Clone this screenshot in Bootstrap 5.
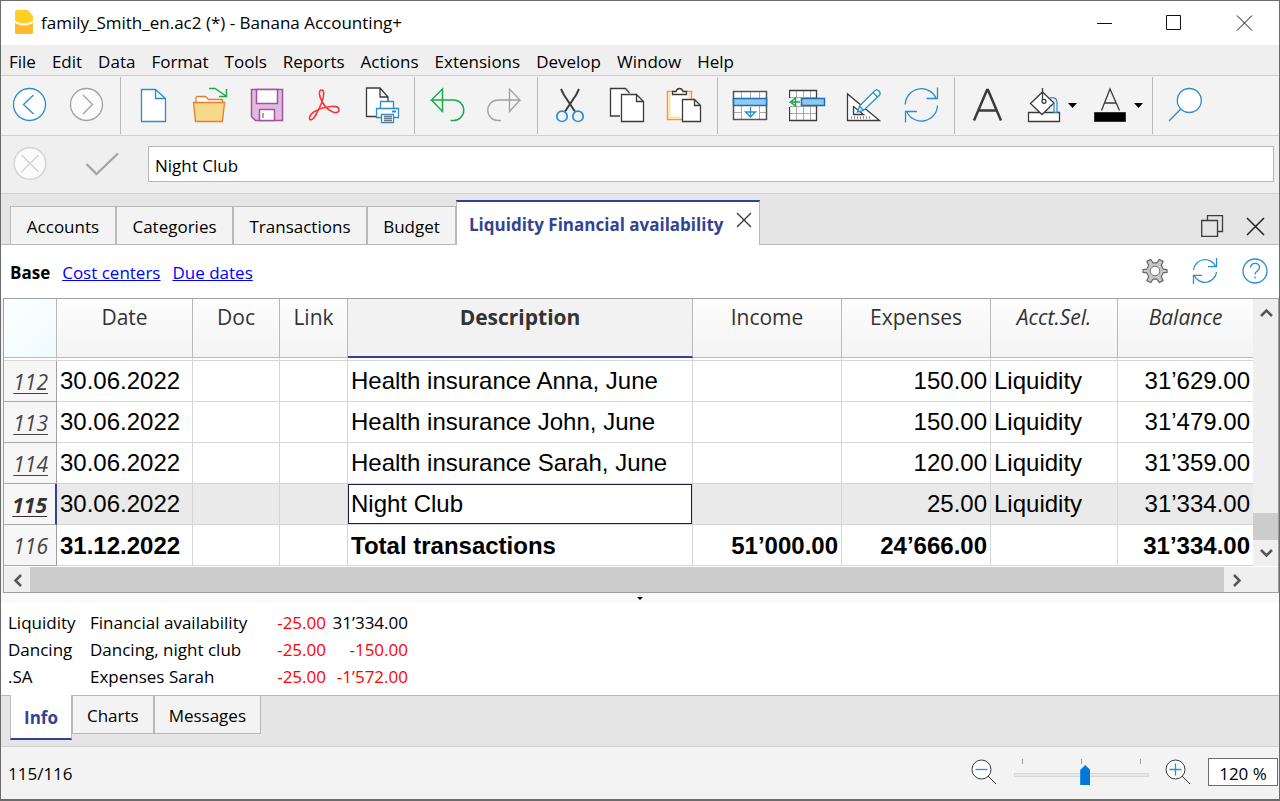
<!DOCTYPE html>
<html lang="en">
<head>
<meta charset="utf-8">
<meta name="viewport" content="width=device-width, initial-scale=1">
<title>family_Smith_en.ac2 (*) - Banana Accounting+</title>
<link href="https://cdn.jsdelivr.net/npm/bootstrap@5.3.0/dist/css/bootstrap.min.css" rel="stylesheet">
<style>
:root { --line: #b9b9b9; --soft: #d0d0d0; --accent: #324394; --blue: #2a8dd0; }
body { font: 17px/24px "Open Sans", "Noto Sans", sans-serif; color: #000; background: #fff; }
svg { display: block; fill: none; }
button { border: 0; background: none; padding: 0; color: inherit; }
.app-window { min-height: 100vh; border: 1px solid #6b6b6b; border-bottom-width: 2px; background: #f3f3f3; }

.title-bar { height: 44px; padding-left: 10px; background: #fff; }
.title-bar h1 { font-size: 17px; line-height: 24px; margin: 0 0 0 4px; font-weight: 400; }
.win-btn { width: 70px; height: 44px; }

.menu-bar { height: 31px; background: #efefef; border-bottom: 1px solid var(--soft); padding-left: 8px; gap: 16px; }
.menu-bar button { line-height: 30px; padding-top: 2px; white-space: nowrap; }

.tool-bar { height: 60px; border-bottom: 1px solid var(--soft); }
.tool-group { padding: 0 4px; border-right: 1px solid var(--line); margin: 1px 0; }
.tool-group:first-child { padding: 0 5px 0 0; }
.tool-group:last-child { border: 0; }
.tool { width: 57px; flex: none; display: flex; align-items: center; justify-content: center; }
.tool.with-menu { width: 66px; justify-content: flex-start; padding-left: 10px; gap: 5px; }
.k { stroke: #3b3b3b; stroke-width: 1.3; }
.b { stroke: var(--blue); stroke-width: 1.3; }
.g { stroke: #a0a0a0; stroke-width: 1.3; }
.n { stroke: #17ab4c; stroke-width: 1.5; }

.entry-bar { height: 58px; background: #efefef; border-bottom: 1px solid var(--soft); padding: 0 5px 2px 0; }
.entry-bar input { height: 36px; margin-left: 17px; border: 1px solid var(--line); border-radius: 0; padding: 3px 6px 0; font-size: 17px; color: #000; background: #fff; }

.doc-tabs { height: 51px; background: #e5e5e5; padding-left: 9px; box-shadow: inset 0 -1px var(--line); }
.doc-tab { height: 39px; border: 1px solid var(--line); background: #f3f3f3; text-align: center; padding-top: 3px; white-space: nowrap; }
.doc-tab.current { height: 45px; background: #fff; border-top: 2px solid var(--accent); border-bottom: 0; color: var(--accent); font-weight: 700; padding: 2px 6px 0 12px; }
.w-a { min-width: 106px; } .w-b { min-width: 117px; } .w-c { min-width: 134px; } .w-d { min-width: 89px; } .w-e { min-width: 304px; }

.view-bar { height: 53px; background: #fff; padding: 3px 11px 0 9px; gap: 12px; }
.view-bar a { color: #00f; }

.grid-frame { margin: 0 0 0 2px; border: 1px solid #a0a0a0; background: #fff; }
.ledger { width: 100%; table-layout: fixed; border-collapse: separate; border-spacing: 0; font: 24px/36px "Liberation Sans", sans-serif; }
.ledger thead th { height: 59px; vertical-align: top; text-align: center; font: 21px/30px "Open Sans", sans-serif; color: #333; padding: 3px 0 0; background: linear-gradient(#fdfdfd, #f4f4f4); border-right: 1px solid var(--line); border-bottom: 1px solid var(--line); }
.ledger thead th.computed { font-style: italic; }
.ledger thead th.corner { background: linear-gradient(135deg, #fdffff, #effbff); }
.ledger thead th.active-col { background: #f2f2f2; font-weight: 700; border-bottom: 2px solid var(--accent); }
.ledger .spacer td { height: 3px; padding: 0; }
.ledger tbody td, .ledger tbody th { border-right: 1px solid #d6d6d6; border-bottom: 1px solid #d6d6d6; padding: 0 3px; white-space: nowrap; overflow: hidden; }
.ledger tbody td { height: 41px; }
.ledger tbody th { font: italic 21px/36px "Open Sans", sans-serif; color: #444; text-align: right; padding: 2px 8px 0 0; background: #f6f6f6; border-right: 1px solid #a0a0a0; border-bottom-color: #a8a8a8; }
.ledger tbody th.linked { text-decoration: underline; text-decoration-thickness: 1px; text-underline-offset: 3px; }
.ledger tr > :last-child { border-right: 0; }
.ledger .selected td { background: #eaeaea; }
.ledger .selected th { font-weight: 700; color: #333; border-right: 2px solid var(--accent); }
.ledger .selected td.cell-focus { background: #fff; box-shadow: inset 0 0 0 1px #1c1c4c; }
.ledger .total td { font-weight: 700; padding-top: 2px; }
.num { text-align: right; }
.vscroll { width: 25px; flex: none; background: #efefef; }
.vscroll .thumb { height: 27px; background: #cdcdcd; }
.hscroll { height: 26px; border-top: 1px solid #fff; background: #efefef; }
.hscroll .thumb { background: #cdcdcd; }
.scroll-end { width: 26px; height: 26px; display: flex; align-items: center; justify-content: center; }
.scroll-gap { width: 28px; }
.splitter { height: 10px; background: #f9f9f9; }

.info-pane { background: #fff; height: 92px; padding: 6px 0 0 7px; }
.info-pane td { padding: 0; height: 27px; white-space: nowrap; }
.info-pane td.neg { color: #f00; }
.low-tabs { height: 52px; background: #e5e5e5; padding-left: 9px; border-bottom: 1px solid var(--soft); box-shadow: inset 0 1px var(--line); }
.low-tab { height: 39px; border: 1px solid var(--line); background: #f3f3f3; padding: 2px 14px 0; }
.low-tab.current { height: 45px; background: #fff; border-top: 0; border-bottom: 2px solid var(--accent); color: var(--accent); font-weight: 700; padding: 2px 13px 0; }

.status-bar { height: 50px; padding: 0 1px 0 7px; }
.zoom-ticks { height: 6px; padding: 0 8px; }
.zoom-ticks i { width: 1px; height: 5px; background: #a09a90; }
.zoom-box { width: 135px; }
.zoom-range { appearance: none; -webkit-appearance: none; display: block; width: 135px; height: 20px; margin: 0; background: transparent; }
.zoom-range::-webkit-slider-runnable-track { height: 4px; background: #e7eaea; border: 1px solid #d6d6d6; }
.zoom-range::-webkit-slider-thumb { -webkit-appearance: none; width: 10px; height: 20px; margin-top: -9px; background: #0078d7; clip-path: polygon(0 25%, 50% 0, 100% 25%, 100% 100%, 0 100%); }
.zoom-value { width: 70px; height: 28px; border: 1px solid #6b6b6b; background: #fff; padding: 2px 0 0; text-align: center; font-size: 17px; color: #000; }
</style>
</head>
<body>
<div class="app-window d-flex flex-column">

  <header class="title-bar d-flex align-items-center">
    <svg width="26" height="26" viewBox="0 0 26 26" aria-hidden="true"><path d="M5.500 0H17l5 6v5q-9 5-18 0V1.500Q4 0 5.500 0z" fill="#ffcf26"/><path d="M4 13q9 5 18 0v9.500q0 1.500-1.500 1.500h-15Q4 24 4 22.500z" fill="#ffbb2c"/></svg>
    <h1>family_Smith_en.ac2 (*) - Banana Accounting+</h1>
    <div class="ms-auto d-flex">
      <button class="win-btn" aria-label="Minimize"><svg class="m-auto" width="17" height="17" viewBox="0 0 17 17" stroke="#111"><path d="M1 8.500h15"/></svg></button>
      <button class="win-btn" aria-label="Maximize"><svg class="m-auto" width="17" height="17" viewBox="0 0 17 17" stroke="#111"><path d="M.500.500h14v14h-14z"/></svg></button>
      <button class="win-btn" aria-label="Close"><svg class="m-auto" width="17" height="17" viewBox="0 0 17 17" stroke="#111"><path d="M1 .500l15 15M16 .500l-15 15"/></svg></button>
    </div>
  </header>

  <nav class="menu-bar d-flex">
    <button>File</button><button>Edit</button><button>Data</button><button>Format</button><button>Tools</button><button>Reports</button><button>Actions</button><button>Extensions</button><button>Develop</button><button>Window</button><button>Help</button>
  </nav>

  <div class="tool-bar d-flex" role="toolbar" aria-label="Standard">
    <div class="tool-group d-flex">
      <button class="tool" aria-label="Back"><svg width="37" height="37"><g class="b"><circle cx="18.500" cy="17.500" r="16" fill="#fff"/><path d="M22.500 8L12.500 17.500l10 9.500"/></g></svg></button>
      <button class="tool" aria-label="Forward"><svg width="37" height="37"><g class="g"><circle cx="18.500" cy="17.500" r="16" fill="#fbfbfb"/><path d="M15 8l9.500 9.500L15 27"/></g></svg></button>
    </div>
    <div class="tool-group d-flex">
      <button class="tool" aria-label="New"><svg width="37" height="37"><path class="b" fill="#fff" d="M6.500 2.500h14l10 9v23h-24zM20.500 2.500v9h10"/></svg></button>
      <button class="tool" aria-label="Open"><svg width="37" height="37"><g stroke="#e87e2c" stroke-width="1.300"><path fill="#fff" d="M4 16v-5.500l1-1h8.500l3 3h14V16"/><path fill="#f7d98c" d="M1.500 15.500h31l-2 19h-27z"/></g><path class="n" d="M17 1.500h6l11 7.500M34.500 2v7.500H27"/></svg></button>
      <button class="tool" aria-label="Save"><svg width="37" height="37"><g stroke="#a74fa7" stroke-width="1.500"><path fill="#dfbcdd" d="M2.500 2.500h31v31h-27l-4-4z"/><path fill="#fff" d="M7.500 2.500h21v14h-21zM10.500 22.500h15v11h-15z"/></g><path stroke="#888" stroke-width="1.500" d="M14 26v5"/></svg></button>
      <button class="tool" aria-label="Export to PDF"><svg width="37" height="37"><path stroke="#f4393c" stroke-width="1.600" d="M15.500 3c-3.200 0-2.500 6 .5 11.500S23 23.500 27 25s6 0 6-2.500-3-3.500-8-3-11 2-15.500 4.500-6 5.500-6 7.500 3 2.500 6-3 7.500-14 8-19.500-.5-6-2-6z"/></svg></button>
      <button class="tool" aria-label="Print"><svg width="37" height="37"><path class="k" fill="#fff" d="M13 29.500H3.500V1H17l8 9v4M17 1v9h8"/><g class="b"><path fill="#fff" d="M17.500 14.500h13v7h-13zM13.500 21.500h22v9h-22z"/><path d="M29 24.500h4" stroke-width="2"/><path fill="#fff" d="M18.500 27.500h12v8h-12z"/></g><path stroke="#777" d="M21 29.500h8M21 31.500h8M21 33.500h8" stroke-width="1.500"/></svg></button>
    </div>
    <div class="tool-group d-flex">
      <button class="tool" aria-label="Undo"><svg width="37" height="37"><path class="n" d="M21.500 33.500h3a10.200 10.200 0 0 0 0-20.500H2.500l11-11v22.500L2.500 13"/></svg></button>
      <button class="tool" aria-label="Redo"><svg width="37" height="37"><path class="g" d="M15 33.500h-3A10.200 10.200 0 0 1 12 13h22L23.500 2v22.500L34 13"/></svg></button>
    </div>
    <div class="tool-group d-flex">
      <button class="tool" aria-label="Cut"><svg width="37" height="37"><path stroke="#3b3b3b" stroke-width="2" d="M9 2l3 6 11 16.500M27 2l-3 6-11 16.500"/><g stroke="#2a8dd0" stroke-width="1.700"><circle cx="10" cy="29.300" r="5.200"/><circle cx="26" cy="29.300" r="5.200"/></g></svg></button>
      <button class="tool" aria-label="Copy"><svg width="37" height="37"><g class="k"><path fill="#fff" d="M11 29H1.500V1.500h15l4 4.500"/><path fill="#fff" d="M12.500 7.500h15l7 7v20h-22zM27.500 7.500v7h7"/></g></svg></button>
      <button class="tool" aria-label="Paste"><svg width="37" height="37"><path fill="#fff" stroke="#f0973f" stroke-width="1.500" d="M1.500 4.500h24v28h-24z"/><path stroke="#fbe3a5" stroke-width="2" d="M3.500 6v24.500H15M23.500 6v5"/><path class="k" fill="#fff" d="M6.500 7.500v-3h3.500q1-3 3.500-3t3.500 3h3.500v3z"/><path class="k" fill="#fff" d="M16.500 12.500h12l6 6v16h-18zM28.500 12.500v6h6"/></svg></button>
    </div>
    <div class="tool-group d-flex">
      <button class="tool" aria-label="Insert rows"><svg width="37" height="37"><path fill="#fff" d="M1.500 4.500h33v28h-33z"/><path stroke="#aaa" d="M9.500 5v27M18.500 5v6M27.500 5v27M2 25.500h7M27 25.500h7"/><path stroke="#555" stroke-width="1.500" d="M1.500 4.500h33v28h-33z"/><path fill="#92c8ec" stroke="#1b6fb3" stroke-width="1.500" d="M1.500 11.500h33v7h-33z"/><path class="b" d="M18.500 20v9.500M13.500 25h10l-5 5z"/></svg></button>
      <button class="tool" aria-label="Add rows"><svg width="37" height="37"><path fill="#fff" d="M.5 3.500h27v30H.5z"/><path stroke="#aaa" d="M7.500 4v29M14.500 4v29M21.500 4v29M1 10.500h26M1 19.500h26M1 26.500h26"/><path fill="#f3f3f3" d="M0 11h12v8H0z"/><path class="k" d="M.5 11V3.500h27V11M.5 20v13.500h27V19"/><path class="n" d="M11 15H1.500l5-4v8l-5-4"/><path fill="#92c8ec" stroke="#1b6fb3" stroke-width="1.500" d="M12.500 11.500h23v7h-23z"/></svg></button>
      <button class="tool" aria-label="Design"><svg width="37" height="37"><path class="k" fill="#fff" d="M1.500 7v26.500h32zM7.500 19.500v8h10z"/><path stroke="#888" stroke-dasharray="1 2" stroke-width="2.500" d="M5 30.500h20"/><path class="b" fill="#fff" d="M11.500 25l2-6L29 3.500q2-1.500 4 .5t.5 4L17.500 23.500zM13.500 19l4 4.500M27 5.500l4.500 4.500"/></svg></button>
      <button class="tool" aria-label="Recalculate"><svg width="37" height="37"><path class="b" d="M2.300 17.500A16.100 16.100 0 0 1 33.200 11.500M34.500.5v11h-11M34.500 18.500A16.100 16.100 0 0 1 3.700 24.500M2.500 35.500v-11h11.500"/></svg></button>
    </div>
    <div class="tool-group d-flex">
      <button class="tool" aria-label="Font"><svg width="37" height="37"><path stroke="#3b3b3b" stroke-width="2.500" d="M5 33.500L18 3h1l13 30.500M9 23.500h19"/></svg></button>
      <button class="tool with-menu" aria-label="Fill colour"><svg width="37" height="37"><path class="k" fill="#fff" d="M2.500 25.500h31v9h-31z"/><path class="k" fill="#fff" d="M4.500 16.500L16.500 5l11.500 11-12 11.500z"/><g class="k"><path d="M16.500 1v12"/><circle cx="18" cy="14.300" r="2"/></g><path stroke="#2a8dd0" stroke-width="1.200" d="M23.500 11q7.500-1.500 7.500 4.500v10h-3V16"/></svg><svg width="9" height="5"><path fill="#000" d="M0 0h9L4.500 5z"/></svg></button>
      <button class="tool with-menu" aria-label="Text colour"><svg width="37" height="37"><path class="k" d="M9.500 23.500L18 2l9.500 21.500M12.500 16h12"/><path fill="#000" stroke="#333" d="M2.500 25.500h31v9h-31z"/></svg><svg width="9" height="5"><path fill="#000" d="M0 0h9L4.500 5z"/></svg></button>
    </div>
    <div class="tool-group d-flex">
      <button class="tool" aria-label="Search"><svg width="37" height="37"><g class="b"><circle cx="22.300" cy="13.500" r="12" fill="#fff"/><path d="M13.800 22L2 34"/></g></svg></button>
    </div>
  </div>

  <div class="entry-bar d-flex align-items-center">
    <button class="tool" aria-label="Cancel"><svg width="37" height="37"><g stroke="#d4d4d4" stroke-width="1.500"><circle cx="19" cy="18.500" r="15.800" fill="#fbfbfb"/><path d="M10.500 10l17 17M27.500 10l-17 17"/></g></svg></button>
    <button class="tool ms-3" aria-label="Confirm"><svg width="37" height="37"><path stroke="#a2a2a2" stroke-width="2.200" d="M2.500 19l10 10L34 8.500"/></svg></button>
    <input class="form-control flex-fill w-auto" type="text" value="Night Club" aria-label="Cell content">
  </div>

  <div class="doc-tabs d-flex align-items-end">
    <button class="doc-tab w-a">Accounts</button><button class="doc-tab w-b">Categories</button><button class="doc-tab w-c">Transactions</button><button class="doc-tab w-d">Budget</button>
    <div class="doc-tab current w-e d-flex align-items-center justify-content-between"><span>Liquidity Financial availability</span><button aria-label="Close tab"><svg class="mb-2" width="18" height="18" stroke="#333" stroke-width="1.300"><path d="M2 1l14 14M16 1L2 15"/></svg></button></div>
    <div class="ms-auto d-flex gap-3 pe-2 pb-2">
      <button class="me-1" aria-label="Detach"><svg width="24" height="22"><path class="k" d="M6.500 5V.700h15v15.800H17M.700 5.500h15.800v15.800H.7z"/></svg></button>
      <button aria-label="Close view"><svg width="26" height="22" stroke="#222" stroke-width="1.500"><path d="M2 3l17 17M19 3L2 20"/></svg></button>
    </div>
  </div>

  <div class="view-bar d-flex align-items-center">
    <strong>Base</strong><a href="#cost-centers">Cost centers</a><a href="#due-dates">Due dates</a>
    <div class="ms-auto d-flex align-items-center gap-4 pb-1">
      <button aria-label="Settings"><svg width="26" height="26" viewBox="0 0 27 27"><path fill="#c8c8c8" stroke="#666" stroke-width="1.200" stroke-linejoin="round" d="M1 12l4-.5 2-4-2-4L9 1.500l2.500 3.500h4L18 1.500l4 2-2 4 2 4 4 .5v3l-4 .5-2 4 2 4-4 2-2.500-3.500h-4L9 25.500l-4-2 2-4-2-4L1 15z"/><circle cx="13.500" cy="13.500" r="5" fill="#fff" stroke="#666"/></svg></button>
      <button aria-label="Refresh"><svg width="26" height="28" viewBox="0 0 27 28" class="b"><path d="M1.500 13A12.200 12.200 0 0 1 24.800 9.500M25.500.5v9h-9M25.500 15A12.200 12.200 0 0 1 2.200 18.500M1.500 27.500v-9h9"/></svg></button>
      <button aria-label="Help"><svg width="26" height="26" viewBox="0 0 26 26" class="b"><circle cx="13" cy="13" r="12"/><path d="M8.500 9.500C8.500 4 17.500 4 17.500 9.500c0 3.500-4.500 3.500-4.500 7M13 18.500v2"/></svg></button>
    </div>
  </div>

  <main class="grid-frame">
    <div class="d-flex">
      <table class="ledger">
        <colgroup><col style="width:53px"><col style="width:136px"><col style="width:87px"><col style="width:68px"><col><col style="width:149px"><col style="width:149px"><col style="width:127px"><col style="width:135px"></colgroup>
        <thead><tr><th class="corner"></th><th>Date</th><th>Doc</th><th>Link</th><th class="active-col">Description</th><th>Income</th><th>Expenses</th><th class="computed">Acct.Sel.</th><th class="computed">Balance</th></tr></thead>
        <tbody>
          <tr class="spacer"><td></td><td></td><td></td><td></td><td></td><td></td><td></td><td></td><td></td></tr>
          <tr><th class="linked">112</th><td>30.06.2022</td><td></td><td></td><td>Health insurance Anna, June</td><td class="num"></td><td class="num">150.00</td><td>Liquidity</td><td class="num">31’629.00</td></tr>
          <tr><th class="linked">113</th><td>30.06.2022</td><td></td><td></td><td>Health insurance John, June</td><td class="num"></td><td class="num">150.00</td><td>Liquidity</td><td class="num">31’479.00</td></tr>
          <tr><th class="linked">114</th><td>30.06.2022</td><td></td><td></td><td>Health insurance Sarah, June</td><td class="num"></td><td class="num">120.00</td><td>Liquidity</td><td class="num">31’359.00</td></tr>
          <tr class="selected"><th class="linked">115</th><td>30.06.2022</td><td></td><td></td><td class="cell-focus">Night Club</td><td class="num"></td><td class="num">25.00</td><td>Liquidity</td><td class="num">31’334.00</td></tr>
          <tr class="total"><th>116</th><td>31.12.2022</td><td></td><td></td><td>Total transactions</td><td class="num">51’000.00</td><td class="num">24’666.00</td><td></td><td class="num">31’334.00</td></tr>
        </tbody>
      </table>
      <div class="vscroll d-flex flex-column">
        <div class="scroll-end"><svg width="13" height="9" stroke="#555" stroke-width="2.500"><path d="M1 8l5.500-5.500L12 8"/></svg></div>
        <div class="thumb mt-auto"></div>
        <div class="scroll-end"><svg width="13" height="9" stroke="#555" stroke-width="2.500"><path d="M1 1l5.500 5.500L12 1"/></svg></div>
      </div>
    </div>
    <div class="hscroll d-flex align-items-stretch">
      <div class="scroll-end"><svg width="9" height="13" stroke="#555" stroke-width="2.500"><path d="M8 1L2.500 6.500 8 12"/></svg></div>
      <div class="thumb flex-fill"></div>
      <div class="scroll-end"><svg width="9" height="13" stroke="#555" stroke-width="2.500"><path d="M1 1l5.500 5.500L1 12"/></svg></div>
      <div class="scroll-gap"></div>
    </div>
  </main>
  <div class="splitter d-flex justify-content-center align-items-center"><svg width="6" height="3"><path fill="#000" d="M0 0h6L3 3z"/></svg></div>

  <section class="info-pane">
    <table>
      <colgroup><col style="width:82px"><col style="width:176px"><col style="width:60px"><col style="width:82px"></colgroup>
      <tbody>
        <tr><td>Liquidity</td><td>Financial availability</td><td class="num neg">-25.00</td><td class="num">31’334.00</td></tr>
        <tr><td>Dancing</td><td>Dancing, night club</td><td class="num neg">-25.00</td><td class="num neg">-150.00</td></tr>
        <tr><td>.SA</td><td>Expenses Sarah</td><td class="num neg">-25.00</td><td class="num neg">-1’572.00</td></tr>
      </tbody>
    </table>
  </section>

  <nav class="low-tabs d-flex align-items-start">
    <button class="low-tab current">Info</button><button class="low-tab">Charts</button><button class="low-tab">Messages</button>
  </nav>

  <footer class="status-bar d-flex align-items-center">
    <span class="pt-1">115/116</span>
    <div class="ms-auto d-flex align-items-center">
      <button class="me-3" aria-label="Zoom out"><svg width="27" height="27"><path stroke="#3b3b3b" fill="#fff" d="M17 17l8 8M1 10.500a9.500 9.500 0 1 0 19 0 9.500 9.500 0 1 0-19 0"/><path class="b" d="M4.500 10.500h12"/></svg></button>
      <div class="zoom-box"><div class="zoom-ticks d-flex justify-content-between"><i></i><i></i><i></i></div><input class="zoom-range" type="range" min="0" max="100" value="53" aria-label="Zoom"></div>
      <button class="mx-3" aria-label="Zoom in"><svg width="27" height="27"><path stroke="#3b3b3b" fill="#fff" d="M17 17l8 8M1 10.500a9.500 9.500 0 1 0 19 0 9.500 9.500 0 1 0-19 0"/><path class="b" d="M4.500 10.500h12M10.500 4.500v12"/></svg></button>
      <input class="zoom-value" type="text" value="120 %" aria-label="Zoom level">
    </div>
  </footer>
</div>
<script src="https://cdn.jsdelivr.net/npm/bootstrap@5.3.0/dist/js/bootstrap.bundle.min.js"></script>
</body>
</html>
